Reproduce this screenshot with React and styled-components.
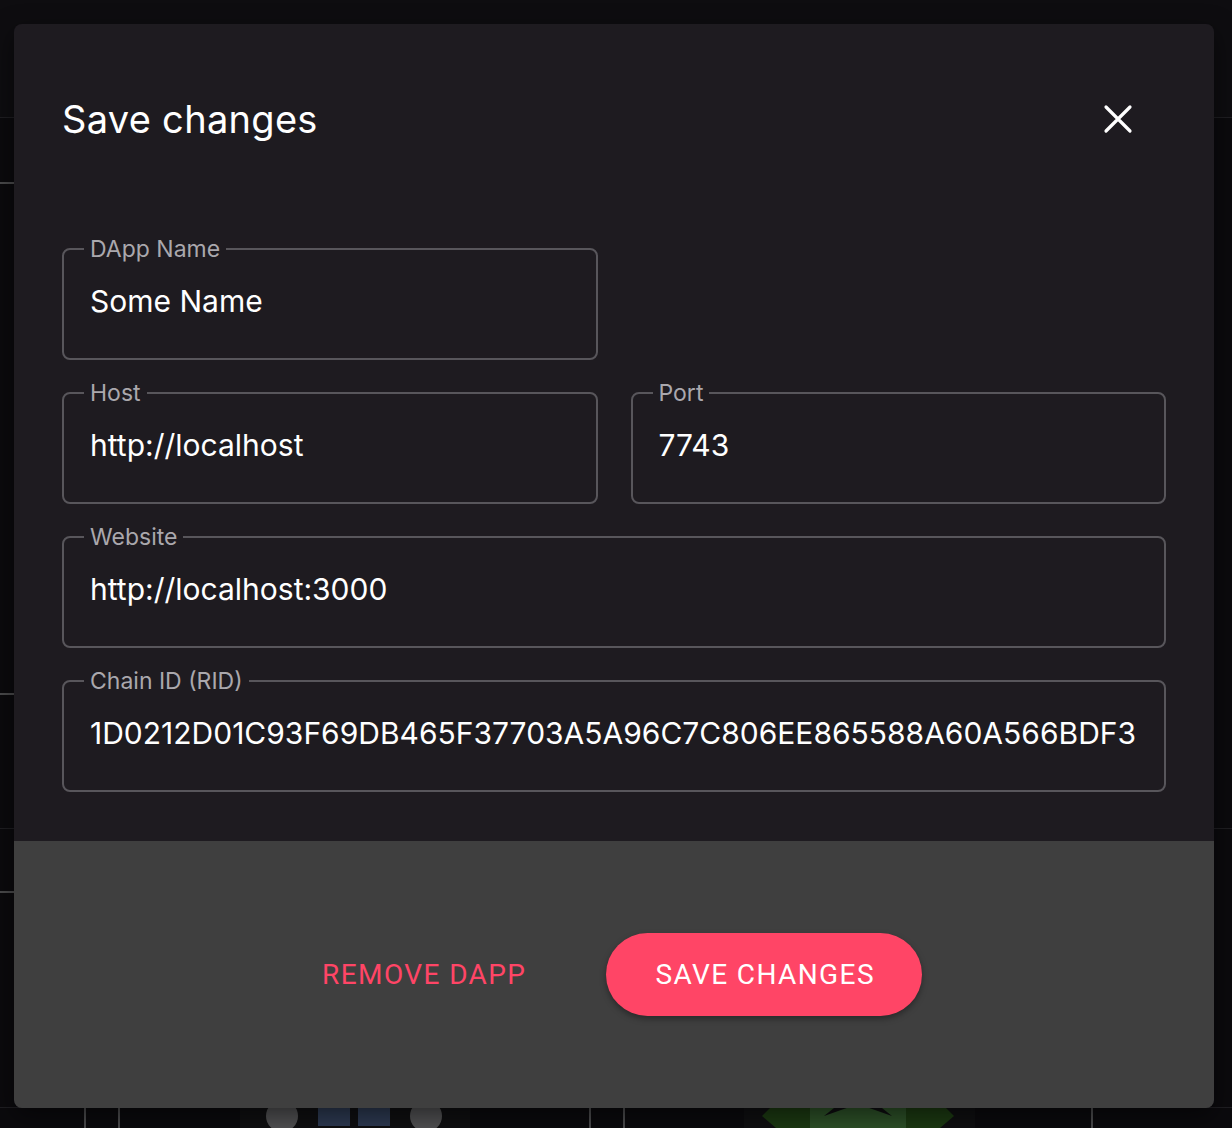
import styled, { createGlobalStyle } from "styled-components";

const GlobalStyle = createGlobalStyle`
  html, body {
    margin: 0;
    padding: 0;
    background: #0b0a0d;
  }
  * {
    box-sizing: border-box;
  }
`;

const Page = styled.div`
  position: relative;
  height: 1128px;
  overflow: hidden;
  background: #0b0a0d;
  font-family: Inter, "Liberation Sans", sans-serif;
`;

/* dimmed page behind the modal */
const Behind = styled.div`
  height: 100%;
  display: flex;
  flex-direction: column;
`;

const TopBar = styled.div`
  height: 118px;
  flex-shrink: 0;
  background: #0e0d10;
  border-bottom: 1px solid #1f1e22;
`;

const Section = styled.div`
  height: ${(p) => p.$h}px;
  flex-shrink: 0;
  border-bottom: 1px solid #1f1e22;
  display: flex;
`;

const Rail = styled.div`
  width: 40px;
  display: flex;
  flex-direction: column;
`;

const RailItem = styled.div`
  height: ${(p) => p.$h}px;
  border-bottom: 2px solid #4a4a4c;
`;

const Filler = styled.div`
  flex: 1;
`;

const Strip = styled.div`
  height: 20px;
  flex-shrink: 0;
  display: flex;
  align-items: stretch;
`;

const Gap = styled.div`
  width: ${(p) => p.$w}px;
  flex-shrink: 0;
`;

const VLine = styled.div`
  width: 2px;
  flex-shrink: 0;
  background: #4c4c4e;
`;

const Shade = styled.div`
  width: ${(p) => p.$w}px;
  flex-shrink: 0;
  background: #0f0f11;
  display: flex;
  align-items: flex-start;
  gap: ${(p) => p.$gap || 0}px;
  padding-left: ${(p) => p.$pad || 0}px;
`;

const Dot = styled.div`
  width: 32px;
  height: 32px;
  margin-top: -8px;
  border-radius: 50%;
  background: #515153;
  flex-shrink: 0;
`;

const TilePair = styled.div`
  display: flex;
  gap: 8px;
`;

const Tile = styled.div`
  width: 32px;
  height: 18px;
  background: #2d3a52;
  flex-shrink: 0;
`;

const Overlay = styled.div`
  position: absolute;
  inset: 0;
  padding: 24px 18px 20px 14px;
  display: flex;
`;

const Dialog = styled.div`
  flex: 1;
  display: flex;
  flex-direction: column;
  border-radius: 8px;
  overflow: hidden;
  box-shadow: 0 8px 24px rgba(0, 0, 0, 0.5);
`;

const Body = styled.div`
  background: #1e1b20;
  padding: 73px 48px 49px;
`;

const Header = styled.div`
  display: flex;
  align-items: center;
  justify-content: space-between;
  height: 44px;
`;

const Title = styled.h2`
  margin: 0;
  font-size: 38px;
  line-height: 44px;
  font-weight: 400;
  color: #ffffff;
  letter-spacing: 0.3px;
`;

const CloseButton = styled.button`
  width: 48px;
  height: 48px;
  margin-right: 24px;
  padding: 0;
  border: 0;
  background: transparent;
  display: flex;
  align-items: center;
  justify-content: center;
  cursor: pointer;
`;

const Form = styled.div`
  margin-top: 96px;
  display: grid;
  grid-template-columns: 1fr 1fr;
  column-gap: 33px;
  row-gap: 21px;
`;

const Field = styled.fieldset`
  grid-column: ${(p) => (p.$wide ? "1 / 3" : "auto")};
  margin: 0;
  min-width: 0;
  border: 2px solid #58565b;
  border-radius: 8px;
  padding: 23px 26px 40px;
`;

const Legend = styled.legend`
  margin-left: -6px;
  padding: 0 6px;
  font-size: 23px;
  line-height: 24px;
  color: #aaa8ad;
`;

const Value = styled.div`
  font-size: 30px;
  line-height: 34px;
  color: #ffffff;
  white-space: nowrap;
`;

const Footer = styled.div`
  flex: 1;
  background: #3f3f3f;
  display: flex;
  align-items: center;
  justify-content: center;
  gap: 64px;
`;

const TextButton = styled.button`
  border: 0;
  background: transparent;
  padding: 12px 16px;
  font-family: Roboto, "Liberation Sans", sans-serif;
  font-size: 28px;
  line-height: 34px;
  letter-spacing: 1.4px;
  color: #ff4566;
  cursor: pointer;
`;

const PrimaryButton = styled.button`
  border: 0;
  border-radius: 42px;
  height: 83px;
  padding: 0 47px 0 49px;
  background: #ff4566;
  font-family: Roboto, "Liberation Sans", sans-serif;
  font-size: 28px;
  line-height: 34px;
  letter-spacing: 1.4px;
  color: #ffffff;
  box-shadow: 0 3px 6px rgba(0, 0, 0, 0.35);
  cursor: pointer;
`;

function CloseIcon() {
  return (
    <svg width="30" height="30" viewBox="0 0 30 30">
      <path
        d="M3 3 L27 27 M27 3 L3 27"
        stroke="#ffffff"
        strokeWidth="3.2"
        strokeLinecap="round"
      />
    </svg>
  );
}

function GreenShapes() {
  return (
    <svg width="192" height="20" viewBox="0 0 192 20">
      <path d="M0 8 L18 -10 L48 -10 L48 20 L14 20 Z" fill="#1c3a12" />
      <rect x="48" y="0" width="96" height="20" fill="#2d5128" />
      <path d="M62 8 L96 -4 L130 8 L120 0 L72 0 Z" fill="#0e0d10" />
      <path d="M144 -10 L174 -10 L192 8 L178 20 L144 20 Z" fill="#1c3a12" />
    </svg>
  );
}

const fields = [
  { label: "DApp Name", value: "Some Name" },
  { label: "", value: null },
  { label: "Host", value: "http://localhost" },
  { label: "Port", value: "7743" },
  { label: "Website", value: "http://localhost:3000", wide: true },
  {
    label: "Chain ID (RID)",
    value: "1D0212D01C93F69DB465F37703A5A96C7C806EE865588A60A566BDF3",
    wide: true,
  },
];

export default function App() {
  return (
    <Page>
      <GlobalStyle />
      <Behind>
        <TopBar />
        <Section $h={711}>
          <Rail>
            <RailItem $h={66} />
            <RailItem $h={511} />
          </Rail>
          <Filler />
        </Section>
        <Section $h={279}>
          <Rail>
            <RailItem $h={64} />
          </Rail>
          <Filler />
        </Section>
        <Strip>
          <Gap $w={84} />
          <VLine />
          <Gap $w={32} />
          <VLine />
          <Gap $w={120} />
          <Shade $w={230} $pad={26} $gap={20}>
            <Dot />
            <TilePair>
              <Tile />
              <Tile />
            </TilePair>
            <Dot />
          </Shade>
          <Gap $w={119} />
          <VLine />
          <Gap $w={32} />
          <VLine />
          <Gap $w={119} />
          <Shade $w={231} $pad={18}>
            <GreenShapes />
          </Shade>
          <Gap $w={116} />
          <VLine />
        </Strip>
      </Behind>

      <Overlay>
        <Dialog>
          <Body>
            <Header>
              <Title>Save changes</Title>
              <CloseButton aria-label="Close">
                <CloseIcon />
              </CloseButton>
            </Header>
            <Form>
              {fields.map((f, i) =>
                f.value === null ? (
                  <div key={i} />
                ) : (
                  <Field key={i} $wide={f.wide}>
                    <Legend>{f.label}</Legend>
                    <Value>{f.value}</Value>
                  </Field>
                )
              )}
            </Form>
          </Body>
          <Footer>
            <TextButton>REMOVE DAPP</TextButton>
            <PrimaryButton>SAVE CHANGES</PrimaryButton>
          </Footer>
        </Dialog>
      </Overlay>
    </Page>
  );
}
